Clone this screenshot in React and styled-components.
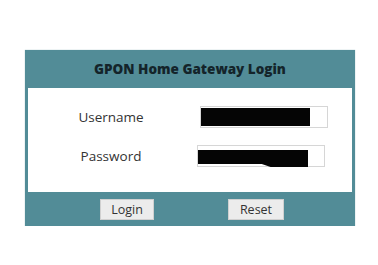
import styled, { createGlobalStyle } from "styled-components";

const Global = createGlobalStyle`
body {
margin: 0;
background: #fff;
font-family: "Open Sans", "DejaVu Sans", sans-serif;
}
`;

const Panel = styled.div`
margin: 50px 0 0 25px;
width: 330px;
background: #528c97;
padding: 0 3px;
box-sizing: border-box;
box-shadow: 0 0 1px rgba(82, 140, 151, 0.6);
`;

const Header = styled.div`
height: 38px;
display: flex;
align-items: center;
justify-content: center;
font-weight: 800;
font-size: 13.5px;
color: #14242a;
`;

const Body = styled.div`
background: #fff;
height: 104px;
box-sizing: border-box;
padding-top: 18px;
display: grid;
grid-template-columns: 166px 1fr;
grid-auto-rows: 22px;
row-gap: 17px;
align-items: center;
`;

const Label = styled.div`
text-align: center;
font-size: 13.5px;
color: #333;
`;

const Field = styled.div`
margin-left: ${(p) => p.$offset}px;
width: 128px;
height: 22px;
box-sizing: border-box;
border: 1px solid #d6d6d6;
display: flex;
align-items: ${(p) => p.$align || "center"};
`;

const Redact = styled.div`
width: ${(p) => p.$w}px;
height: ${(p) => p.$h || 18}px;
margin-top: ${(p) => p.$top || 0}px;
flex-shrink: 0;
background: #050505;
clip-path: ${(p) => p.$shape || "none"};
`;

const Footer = styled.div`
height: 34px;
display: flex;
align-items: center;
padding-left: 72px;
gap: 74px;
`;

const Button = styled.button`
width: ${(p) => p.$w}px;
height: 21px;
border: 1px solid #d0d0d0;
background: #ececec;
color: #333;
font-family: inherit;
font-size: 12.5px;
padding: 0;
`;

export default function App() {
  return (
    <>
      <Global />
      <Panel>
        <Header>GPON Home Gateway Login</Header>
        <Body>
          <Label>Username</Label>
          <Field $offset={6}>
            <Redact $w={109} />
          </Field>
          <Label>Password</Label>
          <Field $offset={3} $align="flex-start">
            <Redact
              $w={110}
              $h={17}
              $top={4}
              $shape="polygon(0 0, 100% 0, 100% 100%, 66% 100%, 58% 82%, 0 82%)"
            />
          </Field>
        </Body>
        <Footer>
          <Button $w={54}>Login</Button>
          <Button $w={56}>Reset</Button>
        </Footer>
      </Panel>
    </>
  );
}
